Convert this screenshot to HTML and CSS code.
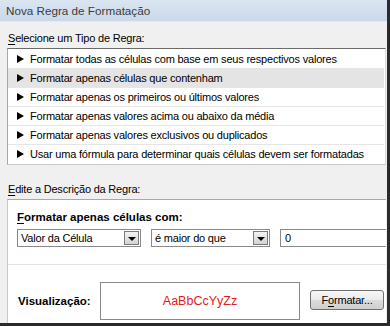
FILE: index.html
```html
<!DOCTYPE html>
<html lang="pt">
<head>
<meta charset="utf-8">
<title>Nova Regra de Formatação</title>
<link rel="stylesheet" href="styles.css">
</head>
<body>
<div class="window">
  <div class="titlebar">Nova Regra de Formatação</div>
  <div class="content">
    <div class="label label-first"><span class="u">S</span>elecione um Tipo de Regra:</div>
    <ul class="rules">
      <li class="rule"><span class="arrow"></span>Formatar todas as células com base em seus respectivos valores</li>
      <li class="rule selected"><span class="arrow"></span>Formatar apenas células que contenham</li>
      <li class="rule"><span class="arrow"></span>Formatar apenas os primeiros ou últimos valores</li>
      <li class="rule"><span class="arrow"></span>Formatar apenas valores acima ou abaixo da média</li>
      <li class="rule"><span class="arrow"></span>Formatar apenas valores exclusivos ou duplicados</li>
      <li class="rule last"><span class="arrow"></span>Usar uma fórmula para determinar quais células devem ser formatadas</li>
    </ul>
    <div class="label label-second"><span class="u">E</span>dite a Descrição da Regra:</div>
    <div class="group">
      <div class="group-top">
        <div class="heading"><span class="u">F</span>ormatar apenas células com:</div>
        <div class="controls">
          <div class="combo combo-a"><span class="combo-text">Valor da Célula</span><span class="drop"><span class="tri"></span></span></div>
          <div class="combo combo-b"><span class="combo-text">é maior do que</span><span class="drop"><span class="tri"></span></span></div>
          <div class="field">0</div>
        </div>
      </div>
      <div class="preview-row">
        <div class="heading preview-label">Visualização:</div>
        <div class="preview-box">AaBbCcYyZz</div>
        <div class="button">F<span class="u">o</span>rmatar...</div>
      </div>
    </div>
  </div>
</div>
</body>
</html>
```
FILE: styles.css
```css
html, body {
  margin: 0;
  padding: 0;
}
body {
  width: 390px;
  height: 326px;
  overflow: hidden;
  font-family: "Liberation Sans", Arial, sans-serif;
  font-size: 11px;
  letter-spacing: -0.2px;
  color: #000;
}
.window {
  box-sizing: border-box;
  width: 390px;
  height: 326px;
  background: #f0f0f0;
  border-right: 3px solid #2b2b2b;
  border-bottom: 3px solid #2b2b2b;
  display: flex;
  flex-direction: column;
  overflow: hidden;
}
.titlebar {
  height: 21px;
  line-height: 21px;
  padding-left: 6px;
  font-size: 11.7px;
  letter-spacing: 0;
  color: #3c3c3c;
  background: linear-gradient(#dbe5f1, #c9d8ea);
  border-bottom: 1px solid #e6eaef;
  flex: none;
}
.content {
  display: flex;
  flex-direction: column;
  padding-left: 7px;
  padding-right: 1px;
  flex: 1;
}
.label {
  line-height: 16px;
  padding-left: 1px;
}
.label-first {
  margin-top: 8px;
  margin-bottom: 2px;
}
.label-second {
  margin-top: 16px;
  margin-bottom: 2px;
}
.u {
  text-decoration: underline;
  text-underline-offset: 2px;
}
.rules {
  list-style: none;
  margin: 0;
  padding: 1px 1px 1px 0;
  background: #fff;
  border-top: 1px solid #6b6b6b;
  border-left: 1px solid #a8a8a8;
  border-bottom: 1px solid #c8c8c8;
  border-right: 1px solid #dcdcdc;
}
.rule {
  height: 18px;
  line-height: 18px;
  border-bottom: 1px solid #e6e6e6;
  display: flex;
  align-items: center;
  padding-left: 9px;
  white-space: nowrap;
}
.rule.last {
  border-bottom: none;
}
.rule.selected {
  background: #e4e4e4;
}
.arrow {
  width: 0;
  height: 0;
  border-left: 7px solid #000;
  border-top: 4px solid transparent;
  border-bottom: 4px solid transparent;
  margin-right: 6px;
  flex: none;
}
.group {
  flex: 1;
  background: #fff;
  border-top: 1px solid #a8a8a8;
  border-left: 1px solid #c8c8c8;
  display: flex;
  flex-direction: column;
}
.group-top {
  padding: 9px 0 0 9px;
  height: 55px;
  border-bottom: 1px solid #e2e2e2;
}
.heading {
  font-weight: bold;
  font-size: 11.5px;
  letter-spacing: 0;
  line-height: 16px;
}
.controls {
  display: flex;
  gap: 10px;
  margin-top: 4px;
}
.combo {
  box-sizing: border-box;
  height: 18px;
  border: 1px solid #8a8a8a;
  background: #fff;
  display: flex;
  align-items: center;
  justify-content: space-between;
  padding: 0 1px 0 3px;
}
.combo-a { width: 124px; }
.combo-b { width: 119px; }
.combo-text {
  line-height: 16px;
  white-space: nowrap;
}
.drop {
  box-sizing: border-box;
  width: 15px;
  height: 14px;
  border: 1px solid #7a7a7a;
  background: linear-gradient(#f2f2f2, #d4d4d4);
  display: flex;
  align-items: center;
  justify-content: center;
}
.tri {
  width: 0;
  height: 0;
  border-top: 4px solid #000;
  border-left: 4px solid transparent;
  border-right: 4px solid transparent;
  margin-top: 1px;
}
.field {
  box-sizing: border-box;
  flex: 1;
  height: 18px;
  border: 1px solid #8a8a8a;
  border-right: none;
  padding-left: 4px;
  line-height: 16px;
}
.preview-row {
  display: flex;
  align-items: flex-start;
  padding: 17px 0 0 10px;
}
.preview-label {
  width: 82px;
  flex: none;
  margin-top: 11px;
}
.preview-box {
  box-sizing: border-box;
  width: 200px;
  height: 38px;
  border: 1px solid #8a8a8a;
  color: #e0201c;
  font-size: 12.5px;
  letter-spacing: 0;
  display: flex;
  align-items: center;
  justify-content: center;
  flex: none;
}
.button {
  box-sizing: border-box;
  margin-left: 10px;
  margin-top: 8px;
  width: 74px;
  height: 20px;
  border: 1px solid #707070;
  border-radius: 3px;
  background: linear-gradient(#f6f6f6 0%, #ebebeb 50%, #dcdcdc 51%, #cfcfcf 100%);
  display: flex;
  align-items: center;
  justify-content: center;
  line-height: 16px;
  white-space: nowrap;
}
```
